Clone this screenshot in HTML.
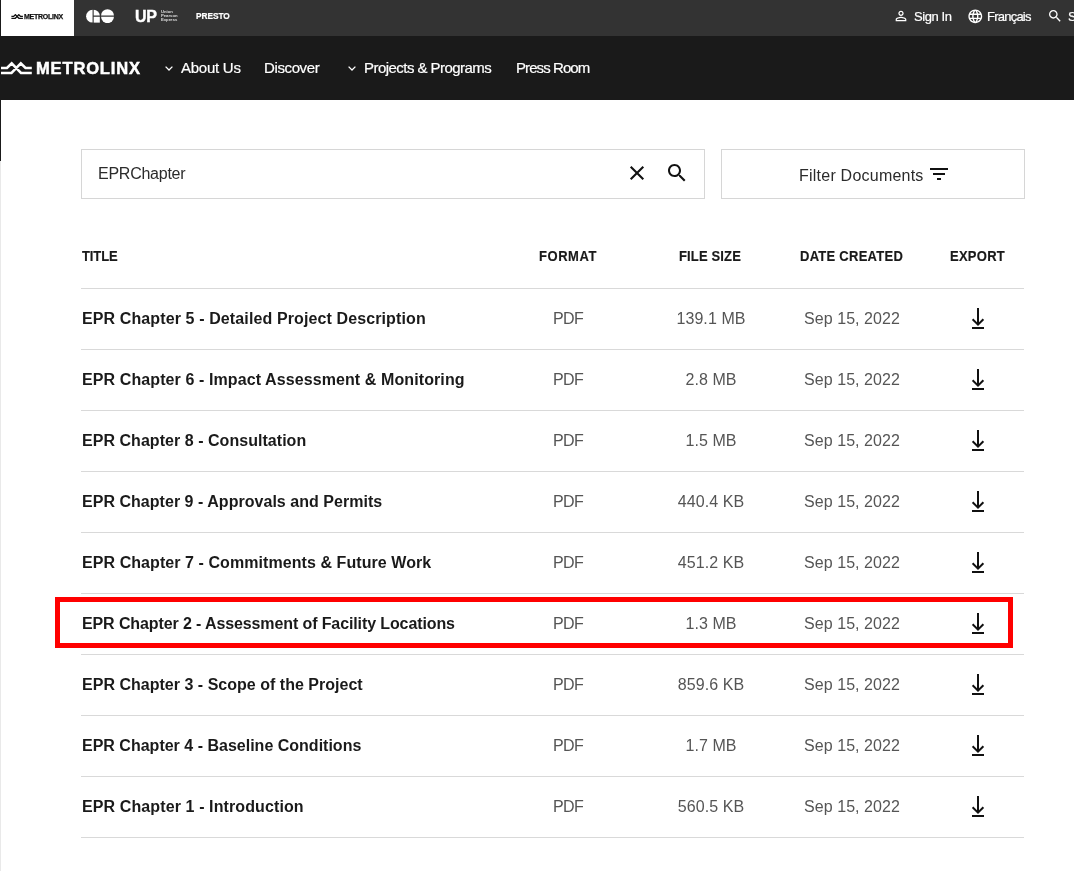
<!DOCTYPE html>
<html lang="en"><head><meta charset="utf-8"><title>Metrolinx - Documents</title>
<style>
*{box-sizing:border-box;margin:0;padding:0}
html,body{width:1074px;height:871px;overflow:hidden;background:#fff}
body{font-family:"Liberation Sans",sans-serif;color:#1a1a1a;position:relative}
.abs{position:absolute;white-space:nowrap}
.abs,.navt,.topt,.th,.row>div{will-change:transform}
#topbar{position:absolute;left:0;top:0;width:1074px;height:36px;background:#333}
#tab{position:absolute;left:1px;top:0;width:73px;height:36px;background:#fff}
#nav{position:absolute;left:0;top:36px;width:1074px;height:64px;background:#1a1a1a}
#edge{position:absolute;left:0;top:0;width:1px;height:161px;background:#1a1a1a}
#edge2{position:absolute;left:0;top:161px;width:1px;height:710px;background:#e9e9e9}
.navt{position:absolute;top:59px;font-size:15px;line-height:18px;color:#fff;white-space:nowrap;-webkit-text-stroke:0.200px #fff}
.topt{position:absolute;top:9px;font-size:13px;line-height:16px;color:#fff;white-space:nowrap;-webkit-text-stroke:0.200px #fff}
#search{position:absolute;left:81px;top:149px;width:624px;height:50px;border:1px solid #d6d6d6;background:#fff}
#filter{position:absolute;left:721px;top:149px;width:304px;height:50px;border:1px solid #d6d6d6;background:#fff}
.th{position:absolute;top:248.500px;font-size:13px;line-height:16px;font-weight:700;color:#1a1a1a;white-space:nowrap;transform:scaleY(1.110);transform-origin:0 12px;-webkit-text-stroke:0.150px #1a1a1a}
.hr{position:absolute;left:81px;width:943px;height:1px;background:#d9d9d9}
.row{position:absolute;left:0;width:1074px;height:60px;font-size:16px;line-height:20px}
.row>div{position:absolute;top:20px;white-space:nowrap}
.c-title{left:81.600px;font-weight:700;letter-spacing:0.12px;color:#1a1a1a}
.c-fmt{left:508.200px;width:120px;text-align:center;color:#555;letter-spacing:-0.6px}
.c-size{left:650.600px;width:120px;text-align:center;color:#555;letter-spacing:0.080px}
.c-date{left:791.700px;width:120px;text-align:center;color:#555;letter-spacing:0.050px}
.row>div.c-exp{left:971px;top:19px;width:14px;height:21px}
.dl{display:block}
#red{position:absolute;left:55px;top:597px;width:958px;height:51px;border:5px solid #ff0000}
</style></head><body>
<div id="topbar"></div>
<div id="tab"></div>
<div id="nav"></div>
<div id="edge"></div><div id="edge2"></div>

<!-- small metrolinx tab logo -->
<svg class="abs" style="left:10.600px;top:14px" width="12.400" height="6" viewBox="0 0 33 16"><path d="M1 6.500H7L11.700 1.800L21 11.400H31.800M1 11.400H11.500L20.800 1.800L25.500 6.500H31.800" fill="none" stroke="#111" stroke-width="3.400"/></svg>
<div class="abs" style="left:23.500px;top:12px;font-size:7px;line-height:9px;font-weight:700;color:#111;letter-spacing:-0.250px;-webkit-text-stroke:0.250px #111">METROLINX</div>

<!-- GO logo -->
<svg class="abs" style="left:85.500px;top:9.100px" width="28.800" height="14.400" viewBox="0 0 30 15">
<path d="M6.800 0.800A6.700 6.700 0 0 0 6.800 14.200Z" fill="#fff"/>
<path d="M8 0.800A6.700 6.700 0 0 1 14.400 6.900H8Z" fill="#fff"/>
<rect x="8" y="8.100" width="6.400" height="6.100" fill="#fff"/>
<path d="M15.700 6.900A6.700 6.700 0 0 1 29.100 6.900Z" fill="#fff"/>
<path d="M15.700 8.100A6.700 6.700 0 0 0 29.100 8.100Z" fill="#fff"/>
</svg>

<!-- UP -->
<div class="abs" style="left:135px;top:8px;font-size:16px;line-height:18px;font-weight:700;color:#fff;letter-spacing:-0.300px;-webkit-text-stroke:0.400px #fff">UP</div>
<div class="abs" style="left:160.500px;top:9.800px;font-size:4.200px;line-height:4.200px;font-weight:700;color:#ddd">Union<br>Pearson<br>Express</div>
<!-- PRESTO -->
<div class="abs" style="left:196px;top:11.300px;font-size:8.300px;line-height:10px;font-weight:700;color:#fff;letter-spacing:-0.050px;-webkit-text-stroke:0.200px #fff">PRESTO</div>

<!-- right top -->
<svg class="abs" style="left:893px;top:8px" width="16" height="16" viewBox="0 0 24 24"><path fill="#fff" d="M12 5.9c1.16 0 2.1.94 2.1 2.1s-.94 2.1-2.1 2.1S9.900 9.160 9.900 8s.94-2.1 2.1-2.100m0 9c2.970 0 6.100 1.460 6.100 2.100v1.100H5.900V17c0-.64 3.130-2.100 6.100-2.100M12 4C9.790 4 8 5.790 8 8s1.790 4 4 4 4-1.790 4-4-1.790-4-4-4zm0 9c-2.670 0-8 1.340-8 4v3h16v-3c0-2.660-5.330-4-8-4z"/></svg>
<div class="topt" style="left:913.5px;letter-spacing:-0.42px">Sign In</div>
<svg class="abs" style="left:966.5px;top:7.7px" width="16.6" height="16.6" viewBox="0 0 24 24"><path fill="#fff" d="M11.99 2C6.470 2 2 6.480 2 12s4.470 10 9.990 10C17.520 22 22 17.520 22 12S17.520 2 11.990 2zm6.930 6h-2.950c-.32-1.250-.78-2.450-1.380-3.560 1.840.63 3.370 1.910 4.330 3.560zM12 4.040c.83 1.200 1.480 2.530 1.910 3.960h-3.820c.43-1.430 1.080-2.760 1.910-3.960zM4.260 14C4.100 13.360 4 12.690 4 12s.1-1.360.26-2h3.380c-.08.660-.14 1.320-.14 2 0 .68.060 1.340.14 2H4.260zm.82 2h2.950c.32 1.250.78 2.450 1.380 3.560-1.840-.63-3.370-1.900-4.330-3.560zm2.950-8H5.080c.96-1.660 2.490-2.930 4.330-3.560C8.810 5.550 8.350 6.750 8.030 8zM12 19.960c-.83-1.200-1.480-2.530-1.910-3.960h3.820c-.43 1.430-1.080 2.760-1.910 3.960zM14.340 14H9.660c-.09-.66-.16-1.320-.16-2 0-.68.070-1.350.16-2h4.680c.09.650.16 1.320.16 2 0 .68-.07 1.340-.16 2zm.25 5.560c.6-1.110 1.060-2.310 1.380-3.560h2.950c-.96 1.650-2.490 2.930-4.330 3.560zM16.360 14c.08-.66.14-1.320.14-2 0-.68-.06-1.340-.14-2h3.380c.16.640.26 1.310.26 2s-.1 1.360-.26 2h-3.380z"/></svg>
<div class="topt" style="left:987.3px;letter-spacing:-0.77px">Français</div>
<svg class="abs" style="left:1047px;top:8.3px" width="16" height="16" viewBox="0 0 24 24"><path fill="#fff" d="M15.5 14h-.79l-.28-.27C15.410 12.590 16 11.110 16 9.500 16 5.910 13.090 3 9.500 3S3 5.910 3 9.500 5.910 16 9.500 16c1.610 0 3.090-.59 4.230-1.570l.27.28v.79l5 4.990L20.490 19l-4.990-5zm-6 0C7.010 14 5 11.990 5 9.500S7.010 5 9.500 5 14 7.010 14 9.500 11.990 14 9.500 14z"/></svg>
<div class="topt" style="left:1067.5px">Search</div>

<!-- main logo -->
<svg class="abs" style="left:0;top:61px" width="33" height="14" viewBox="0 61 33 14"><path d="M1 68H7L11.700 63.300L21 72.900H31.800M1 72.900H11.500L20.800 63.300L25.500 68H31.800" fill="none" stroke="#fff" stroke-width="2.500"/></svg>
<div class="abs" style="left:36px;top:58.500px;font-size:16.500px;line-height:18px;font-weight:700;color:#fff;letter-spacing:0.850px;-webkit-text-stroke:0.500px #fff">METROLINX</div>

<!-- nav items -->
<svg class="abs" style="left:165px;top:66px" width="8" height="5" viewBox="0 0 8 5"><path d="M0.600 0.600L4 4L7.400 0.600" fill="none" stroke="#fff" stroke-width="1.300"/></svg>
<div class="navt" style="left:180.5px;letter-spacing:-0.26px">About Us</div>
<div class="navt" style="left:264.3px;letter-spacing:-0.38px">Discover</div>
<svg class="abs" style="left:347.5px;top:66px" width="8" height="5" viewBox="0 0 8 5"><path d="M0.600 0.600L4 4L7.400 0.600" fill="none" stroke="#fff" stroke-width="1.300"/></svg>
<div class="navt" style="left:364.2px;letter-spacing:-0.54px">Projects &amp; Programs</div>
<div class="navt" style="left:515.5px;letter-spacing:-0.92px">Press Room</div>

<!-- search -->
<div id="search"></div>
<div class="abs" style="left:97.900px;top:164px;font-size:16px;line-height:20px;color:#2b2b2b;letter-spacing:-0.250px">EPRChapter</div>
<svg class="abs" style="left:629px;top:165px" width="16" height="16" viewBox="0 0 16 16"><path d="M1.700 1.700L14.300 14.300M14.300 1.700L1.700 14.300" fill="none" stroke="#111" stroke-width="2.100"/></svg>
<svg class="abs" style="left:665px;top:161px" width="24" height="24" viewBox="0 0 24 24"><path fill="#111" d="M15.5 14h-.79l-.28-.27C15.410 12.590 16 11.110 16 9.500 16 5.910 13.090 3 9.500 3S3 5.910 3 9.500 5.910 16 9.500 16c1.610 0 3.090-.59 4.230-1.570l.27.28v.79l5 4.990L20.490 19l-4.990-5zm-6 0C7.010 14 5 11.990 5 9.500S7.010 5 9.500 5 14 7.010 14 9.500 11.990 14 9.500 14z"/></svg>

<div id="filter"></div>
<div class="abs" style="left:798.800px;top:166px;font-size:16px;line-height:20px;color:#2b2b2b;letter-spacing:0.230px">Filter Documents</div>
<svg class="abs" style="left:927px;top:162px" width="24" height="24" viewBox="0 0 24 24"><path fill="#111" d="M10 18h4v-2h-4v2zM3 6v2h18V6H3zm3 7h12v-2H6v2z"/></svg>

<!-- table header -->
<div class="th" style="left:81.500px;letter-spacing:-0.12px">TITLE</div>
<div class="th" style="left:539px;letter-spacing:0.56px">FORMAT</div>
<div class="th" style="left:679px;letter-spacing:0.15px">FILE SIZE</div>
<div class="th" style="left:800px;letter-spacing:0.26px">DATE CREATED</div>
<div class="th" style="left:950px;letter-spacing:0.26px">EXPORT</div>
<div class="hr" style="top:288px"></div>
<div class="hr" style="top:349px"></div>
<div class="hr" style="top:410px"></div>
<div class="hr" style="top:471px"></div>
<div class="hr" style="top:532px"></div>
<div class="hr" style="top:593px"></div>
<div class="hr" style="top:654px"></div>
<div class="hr" style="top:715px"></div>
<div class="hr" style="top:776px"></div>
<div class="hr" style="top:837px"></div>
<div class="row" style="top:289px">
<div class="c-title" style="letter-spacing:0.114px">EPR Chapter 5 - Detailed Project Description</div><div class="c-fmt">PDF</div><div class="c-size">139.1 MB</div><div class="c-date">Sep 15, 2022</div><div class="c-exp"><svg class="dl" width="14" height="21" viewBox="0 0 14 21"><path d="M7 0V17M1.600 11.200L7 16.600l5.400-5.400" fill="none" stroke="#111" stroke-width="2"/><rect x="1" y="19" width="12" height="2" fill="#111"/></svg></div>
</div>
<div class="row" style="top:350px">
<div class="c-title" style="letter-spacing:0.098px">EPR Chapter 6 - Impact Assessment &amp; Monitoring</div><div class="c-fmt">PDF</div><div class="c-size">2.8 MB</div><div class="c-date">Sep 15, 2022</div><div class="c-exp"><svg class="dl" width="14" height="21" viewBox="0 0 14 21"><path d="M7 0V17M1.600 11.200L7 16.600l5.400-5.400" fill="none" stroke="#111" stroke-width="2"/><rect x="1" y="19" width="12" height="2" fill="#111"/></svg></div>
</div>
<div class="row" style="top:411px">
<div class="c-title" style="letter-spacing:0.040px">EPR Chapter 8 - Consultation</div><div class="c-fmt">PDF</div><div class="c-size">1.5 MB</div><div class="c-date">Sep 15, 2022</div><div class="c-exp"><svg class="dl" width="14" height="21" viewBox="0 0 14 21"><path d="M7 0V17M1.600 11.200L7 16.600l5.400-5.400" fill="none" stroke="#111" stroke-width="2"/><rect x="1" y="19" width="12" height="2" fill="#111"/></svg></div>
</div>
<div class="row" style="top:472px">
<div class="c-title" style="letter-spacing:0.031px">EPR Chapter 9 - Approvals and Permits</div><div class="c-fmt">PDF</div><div class="c-size">440.4 KB</div><div class="c-date">Sep 15, 2022</div><div class="c-exp"><svg class="dl" width="14" height="21" viewBox="0 0 14 21"><path d="M7 0V17M1.600 11.200L7 16.600l5.400-5.400" fill="none" stroke="#111" stroke-width="2"/><rect x="1" y="19" width="12" height="2" fill="#111"/></svg></div>
</div>
<div class="row" style="top:533px">
<div class="c-title" style="letter-spacing:0.071px">EPR Chapter 7 - Commitments &amp; Future Work</div><div class="c-fmt">PDF</div><div class="c-size">451.2 KB</div><div class="c-date">Sep 15, 2022</div><div class="c-exp"><svg class="dl" width="14" height="21" viewBox="0 0 14 21"><path d="M7 0V17M1.600 11.200L7 16.600l5.400-5.400" fill="none" stroke="#111" stroke-width="2"/><rect x="1" y="19" width="12" height="2" fill="#111"/></svg></div>
</div>
<div class="row" style="top:594px">
<div class="c-title" style="letter-spacing:-0.111px">EPR Chapter 2 - Assessment of Facility Locations</div><div class="c-fmt">PDF</div><div class="c-size">1.3 MB</div><div class="c-date">Sep 15, 2022</div><div class="c-exp"><svg class="dl" width="14" height="21" viewBox="0 0 14 21"><path d="M7 0V17M1.600 11.200L7 16.600l5.400-5.400" fill="none" stroke="#111" stroke-width="2"/><rect x="1" y="19" width="12" height="2" fill="#111"/></svg></div>
</div>
<div class="row" style="top:655px">
<div class="c-title" style="letter-spacing:0.017px">EPR Chapter 3 - Scope of the Project</div><div class="c-fmt">PDF</div><div class="c-size">859.6 KB</div><div class="c-date">Sep 15, 2022</div><div class="c-exp"><svg class="dl" width="14" height="21" viewBox="0 0 14 21"><path d="M7 0V17M1.600 11.200L7 16.600l5.400-5.400" fill="none" stroke="#111" stroke-width="2"/><rect x="1" y="19" width="12" height="2" fill="#111"/></svg></div>
</div>
<div class="row" style="top:716px">
<div class="c-title" style="letter-spacing:0.005px">EPR Chapter 4 - Baseline Conditions</div><div class="c-fmt">PDF</div><div class="c-size">1.7 MB</div><div class="c-date">Sep 15, 2022</div><div class="c-exp"><svg class="dl" width="14" height="21" viewBox="0 0 14 21"><path d="M7 0V17M1.600 11.200L7 16.600l5.400-5.400" fill="none" stroke="#111" stroke-width="2"/><rect x="1" y="19" width="12" height="2" fill="#111"/></svg></div>
</div>
<div class="row" style="top:777px">
<div class="c-title" style="letter-spacing:0.110px">EPR Chapter 1 - Introduction</div><div class="c-fmt">PDF</div><div class="c-size">560.5 KB</div><div class="c-date">Sep 15, 2022</div><div class="c-exp"><svg class="dl" width="14" height="21" viewBox="0 0 14 21"><path d="M7 0V17M1.600 11.200L7 16.600l5.400-5.400" fill="none" stroke="#111" stroke-width="2"/><rect x="1" y="19" width="12" height="2" fill="#111"/></svg></div>
</div>
<div id="red"></div>
</body></html>
